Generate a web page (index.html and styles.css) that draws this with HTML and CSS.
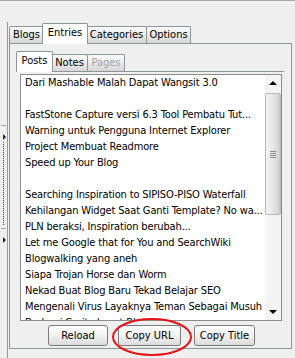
FILE: index.html
```html
<!DOCTYPE html>
<html>
<head>
<meta charset="utf-8">
<link rel="stylesheet" href="styles.css">
</head>
<body>
<div class="window">
  <div class="side">
    <div class="grip">
      <span class="dash"></span>
      <span class="arrow"></span>
      <span class="dots"></span>
      <span class="dash"></span>
      <span class="arrow"></span>
    </div>
    <div class="rule"></div>
  </div>
  <div class="main">
    <div class="tabs">
      <div class="tab w-blogs">Blogs</div>
      <div class="tab active w-entries">Entries</div>
      <div class="tab w-cats">Categories</div>
      <div class="tab w-opts">Options</div>
    </div>
    <div class="panel">
      <div class="tabs sub">
        <div class="tab active w-posts">Posts</div>
        <div class="tab w-notes">Notes</div>
        <div class="tab disabled w-pages">Pages</div>
      </div>
      <div class="subpanel">
        <div class="listbox">
          <ul class="items">
            <li>Dari Mashable Malah Dapat Wangsit 3.0</li>
            <li>&nbsp;</li>
            <li>FastStone Capture versi 6.3 Tool Pembatu Tut...</li>
            <li>Warning untuk Pengguna Internet Explorer</li>
            <li>Project Membuat Readmore</li>
            <li>Speed up Your Blog</li>
            <li>&nbsp;</li>
            <li>Searching Inspiration to SIPISO-PISO Waterfall</li>
            <li>Kehilangan Widget Saat Ganti Template? No wa...</li>
            <li>PLN beraksi, Inspiration berubah...</li>
            <li>Let me Google that for You and SearchWiki</li>
            <li>Blogwalking yang aneh</li>
            <li>Siapa Trojan Horse dan Worm</li>
            <li>Nekad Buat Blog Baru Tekad Belajar SEO</li>
            <li>Mengenali Virus Layaknya Teman Sebagai Musuh</li>
            <li>Berbagi Cerita lewat Blog</li>
          </ul>
          <div class="scrollbar">
            <div class="sb-btn"><span class="tri up"></span></div>
            <div class="sb-track">
              <div class="thumb"><span class="grips"></span></div>
            </div>
            <div class="sb-btn"><span class="tri down"></span></div>
          </div>
        </div>
      </div>
      <div class="buttons">
        <button class="btn b-reload">Reload</button>
        <button class="btn b-url">Copy URL</button>
        <button class="btn b-title">Copy Title</button>
      </div>
    </div>
  </div>
  <svg class="mark" width="295" height="358" viewBox="0 0 295 358">
    <ellipse cx="152" cy="336" rx="39" ry="18" fill="none" stroke="#e3151b" stroke-width="2"/>
  </svg>
</div>
</body>
</html>
```

FILE: styles.css
```css
html, body {
  margin: 0;
  padding: 0;
  background: #efefef;
}
body {
  font-family: "DejaVu Sans Condensed", "Liberation Sans", sans-serif;
  font-stretch: condensed;
  font-size: 11px;
  color: #000;
}
.window {
  position: relative;
  width: 295px;
  height: 358px;
  box-sizing: border-box;
  border-top: 1px solid #a7a7a7;
  display: flex;
  overflow: hidden;
}
.side {
  display: flex;
  width: 8px;
}
.grip {
  width: 7px;
  display: flex;
  flex-direction: column;
  padding-top: 124px;
  box-sizing: border-box;
}
.dash {
  display: block;
  width: 5px;
  height: 1px;
  margin-left: 1px;
  background: #a0a0a0;
}
.arrow {
  display: block;
  width: 0;
  height: 0;
  margin: 8px 0 0 3px;
  border-top: 3px solid transparent;
  border-bottom: 3px solid transparent;
  border-left: 3px solid #1e1e66;
}
.dots {
  display: block;
  width: 1px;
  height: 84px;
  margin: 2px 0 2px 3px;
  background: repeating-linear-gradient(#3a3a3a 0 1px, transparent 1px 2px);
}
.rule {
  width: 1px;
  margin-top: 21px;
  background: #9a9a9a;
}
.main {
  flex: 1;
  padding: 22px 3px 0 1px;
  display: flex;
  flex-direction: column;
}
.tabs {
  display: flex;
  align-items: flex-end;
  height: 20px;
  flex: none;
}
.tab {
  box-sizing: border-box;
  height: 17px;
  border: 1px solid #8f9596;
  border-bottom: none;
  border-radius: 2px 2px 0 0;
  background: linear-gradient(#fafafa, #ececec 45%, #d6d6d6);
  text-align: center;
  line-height: 16px;
  white-space: nowrap;
  margin-right: -1px;
}
.tab.active {
  position: relative;
  z-index: 1;
  height: 21px;
  margin-bottom: -1px;
  background: #fff;
  line-height: 18px;
  margin-left: -1px;
  margin-right: -2px;
}
.tab.disabled { color: #a3a3a3; }
.w-blogs { width: 35px; }
.w-entries { width: 46px; }
.w-cats { width: 61px; }
.w-opts { width: 45px; }
.tab.active.w-posts { width: 37px; margin-left: 0; }
.w-notes { width: 37px; }
.w-pages { width: 38px; }
.panel {
  box-sizing: border-box;
  height: 306px;
  flex: none;
  border: 1px solid #8f9596;
  padding: 7px 7px 0 6px;
  display: flex;
  flex-direction: column;
}
.subpanel {
  flex: none;
  border-top: 1px solid #8f9596;
  padding: 2px 0 0 4px;
}
.listbox {
  box-sizing: border-box;
  width: 262px;
  height: 247px;
  border: 1px solid #8c8c8c;
  background: #fff;
  display: flex;
  overflow: hidden;
}
.items {
  flex: 1;
  margin: 0;
  padding: 0;
  list-style: none;
  overflow: hidden;
  min-width: 0;
  letter-spacing: -0.15px;
}
.items li {
  height: 16px;
  line-height: 16px;
  padding-left: 4px;
  white-space: nowrap;
  overflow: hidden;
}
.scrollbar {
  width: 16px;
  flex: none;
  display: flex;
  flex-direction: column;
  background: #f4f4f4;
}
.sb-btn {
  height: 16px;
  flex: none;
  display: flex;
  align-items: center;
  justify-content: center;
}
.tri {
  width: 0;
  height: 0;
  border-left: 4px solid transparent;
  border-right: 4px solid transparent;
}
.tri.up { border-bottom: 4px solid #000; }
.tri.down { border-top: 4px solid #000; }
.sb-track {
  flex: 1;
  padding-top: 2px;
}
.thumb {
  box-sizing: border-box;
  width: 16px;
  height: 122px;
  border: 1px solid #b9b9b9;
  border-radius: 2px;
  background: linear-gradient(90deg, #f3f3f3, #e9e9e9 40%, #d7d7d7 85%, #c9c9c9);
  display: flex;
  align-items: center;
  justify-content: center;
}
.grips {
  width: 6px;
  height: 7px;
  background: repeating-linear-gradient(#8e8e8e 0 1px, transparent 1px 2px);
}
.buttons {
  display: flex;
  flex: none;
  margin-top: 4px;
  padding-left: 32px;
}
.btn {
  box-sizing: border-box;
  height: 21px;
  padding: 0;
  border: 1px solid #7b7b7b;
  border-radius: 3px;
  background: linear-gradient(#ffffff, #f1f1f1 50%, #dcdcdc);
  font-family: inherit;
  font-stretch: inherit;
  font-size: 11px;
  color: #000;
}
.b-reload { width: 60px; }
.b-url { width: 63px; margin-left: 10px; }
.b-title { width: 61px; margin-left: 13px; }
.mark {
  position: absolute;
  left: 0;
  top: 0;
  pointer-events: none;
}
```
